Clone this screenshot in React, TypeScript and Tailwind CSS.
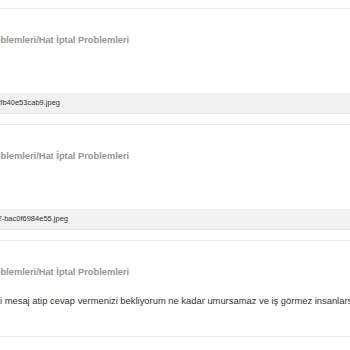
import React from 'react';

const titleText = 'Problemleri/Hat İptal Problemleri';

type Item = {
  file?: string;
  fileEnd?: string;
  message?: string;
};

const items: Item[] = [
  { file: 'a91e-4c2d-8f7fb40e53cab9.jpeg', fileEnd: 'w-[60px]' },
  { file: '4e7a-31d2-bac0f6984e55.jpeg', fileEnd: 'w-[68px]' },
  {
    message:
      'i mesaj atip cevap vermenizi bekliyorum ne kadar umursamaz ve iş görmez insanlarsınız',
  },
];

function Entry({ item }: { item: Item }) {
  return (
    <div className="border-t border-[#ebebeb] overflow-hidden">
      {/* Subject line, clipped at the left edge */}
      <div className="pt-[24px] h-[38px] flex items-center whitespace-nowrap">
        <span className="-ml-[15px] text-[9.3px] leading-[14px] font-bold text-[#959595]">
          {titleText}
        </span>
      </div>

      {item.file && (
        <>
          <div className="mt-[46px] h-[21px] bg-[#f1f1f1] border-b border-[#e4e4e4] flex items-center">
            <div className={`${item.fileEnd} overflow-hidden flex justify-end whitespace-nowrap`}>
              <span className="text-[7.5px] text-[#333]">{item.file}</span>
            </div>
          </div>
          <div className="h-[10px]" />
        </>
      )}

      {item.message && (
        <div className="mt-[16px] pb-[29px] whitespace-nowrap">
          <div className="text-[9.4px] leading-[12px] text-[#333]">{item.message}</div>
        </div>
      )}
    </div>
  );
}

export default function App() {
  return (
    <div
      className="w-[350px] h-[350px] bg-white overflow-hidden"
      style={{ fontFamily: '"Liberation Sans", Arial, sans-serif' }}
    >
      <div className="h-[8px] bg-[#fdfdfd]" />
      {items.map((it, i) => (
        <Entry key={i} item={it} />
      ))}
      <div className="border-t border-[#ebebeb]" />
    </div>
  );
}
